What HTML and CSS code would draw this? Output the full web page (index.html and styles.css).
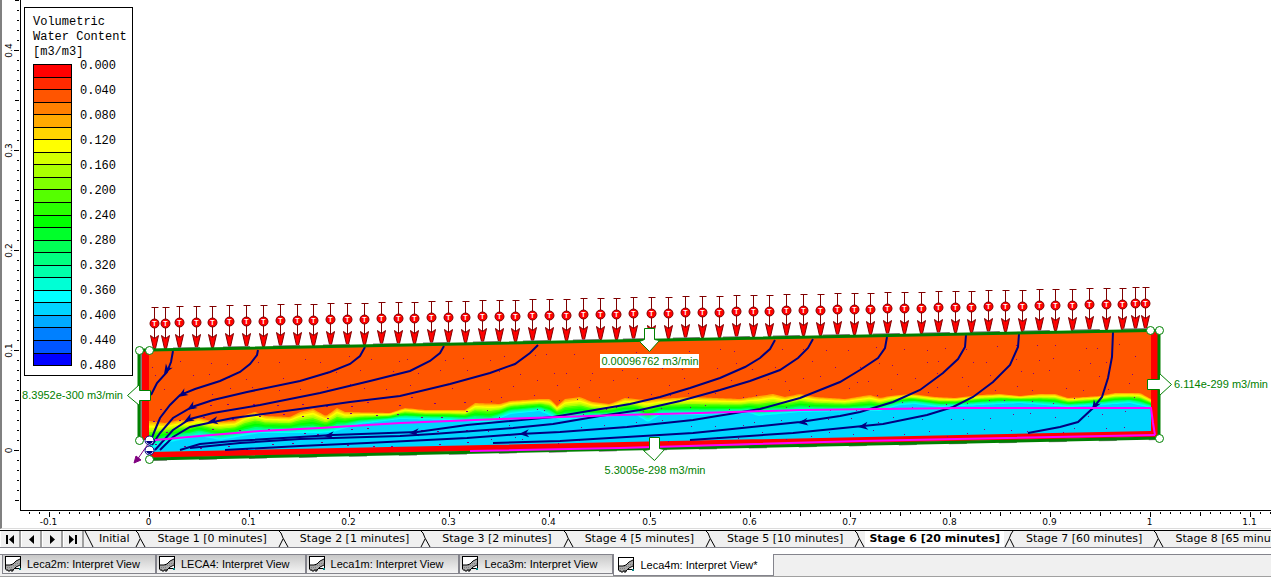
FILE: index.html
```
<!DOCTYPE html>
<html lang="en">
<head>
<meta charset="utf-8">
<title>Leca4m: Interpret View</title>
<link rel="stylesheet" href="styles.css">
</head>
<body>
<main class="plot">
  <svg class="canvas" role="img" aria-label="Volumetric water content section">
    <g id="axes" class="axes"></g>
    <polygon class="soil" points="149,350 1151,330 1151,434 149,453"/>
    <g id="bands"></g>
    <polygon class="liner" points="140,350 149,350 149,440 140,440"/>
    <polygon class="liner" points="1151,330 1159,330 1159,437 149,458 149,452 1151,431"/>
    <g id="nodes" class="nodes"></g>
    <g id="streams" class="streams"></g>
    <g id="loads" class="loads"></g>
    <g class="shade">
      <path d="M173 348.500L1150 329" stroke-dasharray="27 23"/>
      <path d="M149 460L1159 439" stroke-dasharray="18 32"/>
      <path d="M141 350V440"/>
    </g>
    <g class="outline">
      <path d="M149 350L1150 330.500H1159V438L149 459"/>
      <path d="M149 350H139V440"/>
    </g>
    <path class="table-line" d="M155 440L200 436L260 431L320 428L400 423L500 419L560 417L620 415L700 413L800 410L880 409L960 408H1151L1153 423L1155 435"/>
    <path class="table-line" d="M470 451L620 448L860 441L1155 435"/>
    <path class="seep" d="M148 444L137 460M134 463L141 460L136 456Z"/>
    <g class="water">
      <circle cx="149.500" cy="440.500" r="4.500"/><path d="M146 441H153Q152 444 149.500 444T146 441Z"/>
      <circle cx="149.500" cy="450.500" r="4.500"/><path d="M146 451H153Q152 454 149.500 454T146 451Z"/>
    </g>
    <g class="vertex">
      <circle cx="139.500" cy="350.500" r="4"/><circle cx="149.500" cy="350.500" r="4"/>
      <circle cx="139.500" cy="440.500" r="4"/><circle cx="149.500" cy="459.500" r="4"/>
      <circle cx="1150.500" cy="330.500" r="4"/><circle cx="1159.500" cy="330.500" r="4"/>
      <circle cx="1159.500" cy="438.500" r="4"/>
    </g>
    <g class="flux">
      <path d="M139.500 390.500V384.500L127.500 395.500L139.500 405.500V400.500M139.500 390.500H150.500V400.500H139.500"/>
      <path d="M1159.500 379.500V373.500L1171.500 384.500L1159.500 395.500V389.500H1147.500V379.500Z"/>
      <path d="M644.500 328.500H654.500V339.500L659.500 340.500L649.500 351.500L639.500 341.500L644.500 339.500Z"/>
      <path d="M649.500 437.500H659.500V448.500L664.500 449.500L654.500 460.500L643.500 450.500L649.500 449.500Z"/>
    </g>
    <rect class="label-back" x="600" y="354" width="99" height="14"/>
    <g class="flux-text">
      <text x="123" y="399" text-anchor="end">8.3952e-300 m3/min</text>
      <text x="650" y="365" text-anchor="middle">0.00096762 m3/min</text>
      <text x="655" y="474" text-anchor="middle">5.3005e-298 m3/min</text>
      <text x="1174" y="388">6.114e-299 m3/min</text>
    </g>
  </svg>

  <section class="legend">
    <h1 class="legend-title">Volumetric<br>Water Content<br>[m3/m3]</h1>
    <div class="legend-body">
      <div class="ramp" id="ramp"></div>
      <ul class="values">
        <li>0.000</li><li>0.040</li><li>0.080</li><li>0.120</li><li>0.160</li><li>0.200</li><li>0.240</li>
        <li>0.280</li><li>0.320</li><li>0.360</li><li>0.400</li><li>0.440</li><li>0.480</li>
      </ul>
    </div>
  </section>
</main>

<svg class="defs" aria-hidden="true">
  <symbol id="split" viewBox="0 0 11 16"><path d="M1 0L3 2L5 7L10 16M5 8L1 16" fill="none" stroke="#000"/></symbol>
  <symbol id="split-back" viewBox="0 0 11 16"><path d="M9 0L7 3L5 8L1 16M6 8L10 16" fill="none" stroke="#000"/></symbol>
  <symbol id="edge" viewBox="0 0 11 16"><path d="M1 0L9 16" fill="none" stroke="#000"/></symbol>
  <symbol id="doc" viewBox="0 0 17 16">
    <rect x=".5" y=".5" width="15" height="12" fill="#fff" stroke="#000"/>
    <path d="M1 9H5L8 8L11 5L15 3V9L11 11L8 14H1Z" fill="#a8a8a8"/>
    <path d="M1 9H5L8 8L11 5L15 3M15 9L11 11L8 14" fill="none" stroke="#000"/>
    <path d="M2 11.500H8M6 9.500H12M10 7.500H15" stroke="#808080" stroke-dasharray="1 1"/>
    <path d="M1 14H3V15H5V14H8V15H6M0 0V14"  fill="none" stroke="#000"/>
    <rect x="14" y="12" width="2" height="2" fill="#008080"/>
  </symbol>
</svg>

<nav class="stages" aria-label="Stages">
  <button class="step" aria-label="First stage"><svg width="9" height="9"><path d="M0 0H2V9H0ZM8 0V9L3 4.500Z"/></svg></button>
  <button class="step" aria-label="Previous stage"><svg width="9" height="9"><path d="M7 0V9L2 4.500Z"/></svg></button>
  <button class="step" aria-label="Next stage"><svg width="9" height="9"><path d="M2 0V9L7 4.500Z"/></svg></button>
  <button class="step" aria-label="Last stage"><svg width="9" height="9"><path d="M6 0H8V9H6ZM0 0V9L5 4.500Z"/></svg></button>
  <svg class="split"><use href="#edge"/></svg>
  <button class="stage first">Initial</button>
  <svg class="split"><use href="#split"/></svg>
  <button class="stage">Stage 1 [0 minutes]</button>
  <svg class="split"><use href="#split"/></svg>
  <button class="stage">Stage 2 [1 minutes]</button>
  <svg class="split"><use href="#split"/></svg>
  <button class="stage">Stage 3 [2 minutes]</button>
  <svg class="split"><use href="#split"/></svg>
  <button class="stage">Stage 4 [5 minutes]</button>
  <svg class="split"><use href="#split"/></svg>
  <button class="stage">Stage 5 [10 minutes]</button>
  <svg class="split"><use href="#split"/></svg>
  <button class="stage active" aria-current="true">Stage 6 [20 minutes]</button>
  <svg class="split"><use href="#split-back"/></svg>
  <button class="stage">Stage 7 [60 minutes]</button>
  <svg class="split"><use href="#split"/></svg>
  <button class="stage">Stage 8 [65 minutes]</button>
</nav>

<nav class="windows" aria-label="Open windows">
  <button class="window"><svg class="doc"><use href="#doc"/></svg>Leca2m: Interpret View</button>
  <button class="window"><svg class="doc"><use href="#doc"/></svg>LECA4: Interpret View</button>
  <button class="window"><svg class="doc"><use href="#doc"/></svg>Leca1m: Interpret View</button>
  <button class="window"><svg class="doc"><use href="#doc"/></svg>Leca3m: Interpret View</button>
  <button class="window current" aria-current="true"><svg class="doc"><use href="#doc"/></svg>Leca4m: Interpret View*</button>
</nav>
<script src="plot.js"></script>
</body>
</html>
```
FILE: styles.css
```
* { box-sizing: border-box; }
body {
  margin: 0;
  height: 100vh;
  display: flex;
  flex-direction: column;
  overflow: hidden;
  background: #fff;
  color: #000;
  font-family: "Liberation Sans", Arial, sans-serif;
}
button { font: inherit; color: inherit; border: 0; background: none; padding: 0; white-space: nowrap; }
.defs { position: absolute; width: 0; height: 0; }

/* Plot */
.plot { position: relative; flex: 1; min-height: 0; overflow: hidden; border-left: 2px solid #808080; border-bottom: 1px solid #dcdcdc; }
.canvas { display: block; width: calc(100% + 2px); height: 100%; margin-left: -2px; }
.axes { fill: none; stroke: #000; shape-rendering: crispEdges; }
.axes text { fill: #000; stroke: none; font: 9px "DejaVu Sans", sans-serif; text-anchor: middle; }
.soil { fill: #ff5500; }
.liner { fill: #f00; }
.nodes { fill: #800080; shape-rendering: crispEdges; }
.streams { fill: none; stroke: #000080; stroke-width: 2; }
.streams polygon { fill: #000080; stroke: none; }
.loads { stroke: #800000; fill: #f00; }
.loads text { stroke: none; fill: #fff; font: bold 7px "Liberation Sans", sans-serif; text-anchor: middle; }
.shade { fill: none; stroke: #808080; stroke-width: 2; }
.outline { fill: none; stroke: #008000; stroke-width: 3; }
.table-line { fill: none; stroke: #f0f; stroke-width: 2; }
.seep { fill: #800080; stroke: #800080; }
.water circle { fill: #fff; stroke: #000080; }
.water path { fill: #000080; }
.vertex circle { fill: #fff; stroke: #008000; }
.flux path { fill: #fff; stroke: #008000; }
.label-back { fill: #fff; }
.flux-text { fill: #008000; font-size: 11px; }

/* Legend */
.legend {
  position: absolute;
  left: 22px;
  top: 7px;
  width: 109px;
  padding: 7px 0 9px 8px;
  border: 1px solid #000;
  background: #fff;
  font: 12px/15px "Liberation Mono", "Courier New", monospace;
}
.legend-title { margin: 0; font: inherit; }
.legend-body { display: flex; gap: 8px; padding-top: 4px; }
.ramp { display: flex; flex-direction: column; width: 39px; height: 302px; border: 1px solid #000; }
.swatch { flex: 1; }
.swatch + .swatch { border-top: 1px solid #000; }
.values { margin: -10px 0 -13px; padding: 0; list-style: none; line-height: 25px; }

/* Stage tabs */
.stages {
  display: flex;
  height: 18px;
  margin-top: 1px;
  border-top: 1px solid #000;
  border-bottom: 1px solid #84848c;
  background: #f0f0f0;
  overflow: hidden;
  font: 11px/16px "DejaVu Sans", Verdana, sans-serif;
}
.step { flex: none; display: flex; align-items: center; justify-content: center; width: 21px; border-right: 2px solid #a0a0a0; border-left: 1px solid #fff; }
.split { flex: none; width: 11px; height: 16px; }
.stage { flex: none; padding: 0 11px; }
.first { padding: 0 6px 0 4px; }
.active { padding: 0 4px; background: #fff; font-weight: bold; }

/* Window tabs */
.windows {
  display: flex;
  flex: none;
  height: 23px;
  margin-top: 6px;
  padding: 0 2px;
  border-top: 1px solid #84848c;
  border-bottom: 1px solid #a0a0a0;
  background: #f0f0f0;
  font-size: 11px;
}
.window {
  flex: none;
  display: flex;
  align-items: center;
  gap: 5px;
  height: 19px;
  padding: 0 15px 0 2px;
  border: solid #84848c;
  border-width: 0 1px 1px;
  background: linear-gradient(#c8c8c8, #f4f4f4);
}
.current { height: 22px; margin-top: -1px; padding: 0 15px 0 4px; background: #fff; }
.doc { flex: none; width: 17px; height: 16px; }
```
FILE: plot.js
```
const NS = 'http://www.w3.org/2000/svg';
const byId = id => document.getElementById(id);
function add(parent, tag, attrs, text) {
  const el = document.createElementNS(NS, tag);
  for (const k in attrs) el.setAttribute(k, attrs[k]);
  if (text) el.textContent = text;
  parent.appendChild(el);
  return el;
}

// Legend colour ramp
const ramp = ['#ff0000', '#ff2a00', '#ff5500', '#ff8000', '#ffaa00', '#ffd500', '#ffff00', '#d4ff00',
  '#aaff00', '#80ff00', '#55ff00', '#2aff00', '#00ff00', '#00ff2a', '#00ff55', '#00ff80', '#00ffaa',
  '#00ffd5', '#00ffff', '#00d5ff', '#00aaff', '#0080ff', '#0055ff', '#0000ff'];
for (const c of ramp) {
  const s = document.createElement('div');
  s.className = 'swatch';
  s.style.background = c;
  byId('ramp').appendChild(s);
}

// Rulers: one tick per 0.01, longer at 0.05 and 0.1
const axes = byId('axes');
const lastTick = Math.floor((window.innerWidth - 149) / 10.01);
let d = `M20.5 0V510.5H${window.innerWidth}`;
for (let i = -12; i <= lastTick; i++) {
  const x = Math.round(149 + i * 10.01) + 0.5;
  const len = i % 10 === 0 ? 5 : i % 5 === 0 ? 4 : 2;
  d += `M${x} 512v${len}`;
  if (i % 10 === 0) add(axes, 'text', { x: x - 1, y: 525 }, String(i / 100));
}
for (let i = -5; i <= 45; i++) {
  const y = 450.5 - i * 10;
  const len = i % 10 === 0 ? 5 : i % 5 === 0 ? 4 : 2;
  d += `M19 ${y}h-${len}`;
  if (i % 10 === 0) add(axes, 'text', { transform: `translate(12 ${y}) rotate(-90)` }, String(i / 100));
}
add(axes, 'path', { d });

// Transition zone between the dry soil and the saturated soil
const upper = [[149,421],[165,423],[180,420],[190,421],[198,418],[215,422],[235,421],[245,415],[255,412],
  [265,416],[290,417],[300,412],[313,409],[326,416],[337,408],[345,412],[390,413],[405,408],[425,410],
  [465,410],[475,403],[500,404],[510,401],[540,399],[550,399],[557,406],[565,399],[580,397],[592,402],
  [610,404],[625,398],[645,400],[690,397],[740,399],[760,396],[773,394],[785,397],[800,394],[815,397],
  [845,399],[870,395],[880,398],[890,396],[910,394],[935,397],[955,398],[980,395],[1000,394],[1020,396],
  [1040,394],[1055,394],[1068,398],[1085,397],[1100,396],[1115,393],[1140,393],[1151,399]];
const lower = [[149,450],[165,443],[200,436],[220,440],[260,433],[320,433],[333,432],[360,424],[400,419],[450,420],
  [490,423],[510,414],[540,411],[560,420],[590,418],[620,416],[636,415],[648,422],[660,415],[700,415],
  [750,413],[758,416],[800,412],[880,411],[900,405],[915,404],[940,407],[1000,404],[1020,403],[1068,407],
  [1100,405],[1130,403],[1151,408]];
function at(line, x) {
  for (let i = 1; i < line.length; i++) {
    const [x0, y0] = line[i - 1], [x1, y1] = line[i];
    if (x <= x1) return y0 + (y1 - y0) * (x - x0) / (x1 - x0);
  }
  return line[line.length - 1][1];
}
const fills = ['#ffaa00', '#ffd500', '#ffff00', '#d4ff00', '#aaff00', '#55ff00', '#2aff00', '#00ff00',
  '#00ff2a', '#00ff80', '#00ffaa', '#00ffd5', '#00ffff', '#00d5ff'];
fills.forEach((fill, k) => {
  let pts = '';
  for (let x = 149; x <= 1151; x += 2) {
    const a = at(upper, x), b = at(lower, x);
    pts += `${x},${(a + (b - a) * k / (fills.length - 1)).toFixed(1)} `;
  }
  add(byId('bands'), 'polygon', { points: pts + '1151,432 149,452', fill });
});

// Mesh nodes
let seed = 7;
const rnd = () => (seed = (seed * 16807) % 2147483647) / 2147483647;
for (let row = 0; row < 7; row++) {
  for (let x = 158; x < 1145; x += 23) {
    const px = Math.round(x + rnd() * 18 - 6);
    const top = 350 - (px - 149) * 0.02;
    add(byId('nodes'), 'rect', { x: px, y: Math.round(top + 10 + row * 14 + rnd() * 8), width: px < 480 && row > 2 ? 2 : 1, height: 1 });
  }
}

// Flow lines, each with an arrowhead [x, y, angle]
const streams = [
  ['173,351 171,362 167,372 157,383 151,395', [164, 374, 122]],
  ['258,350 257,355 250,364 240,372 220,381 195,389 180,395 170,405 160,418 155,430 151,440', [178, 397, 148]],
  ['365,347 360,356 350,364 330,372 300,381 247,392 213,400 192,407 173,418 160,433 152,445', [187, 410, 148]],
  ['444,346 440,353 430,361 410,371 370,381 320,393 260,405 213,413 190,419 173,430 155,450', [184, 422, 150]],
  ['538,345 530,353 515,364 490,373 450,384 400,396 350,402 300,409 233,418 213,422 190,427 173,437 160,450', [208, 422, 170]],
  ['775,340 770,349 760,358 745,367 720,378 690,388 660,397 630,404 577,413 553,417 467,425 417,432 333,435 300,437 233,441 200,444 180,450', [324, 436, 176]],
  ['813,339 808,348 798,358 780,370 750,381 720,390 680,401 640,410 600,416 553,424 513,428 433,434 400,436 300,439 240,443 190,448', [409, 433, 176]],
  ['887,337 885,348 878,358 860,370 840,382 800,398 760,409 693,420 627,427 560,432 520,434 467,438 367,443 300,446 225,450', [519, 434, 176]],
  ['966,335 965,347 958,359 943,373 920,390 893,402 860,412 840,416 800,422 693,433 560,441 493,443', [798, 423, 172]],
  ['1019,334 1018,347 1010,365 993,382 973,397 953,407 927,415 883,424 853,427 793,433 690,440', [858, 427, 173]],
  ['1113,332 1112,357 1108,378 1102,397 1093,408 1078,422 1060,427 1028,433', [1092, 410, 122]],
];
for (const [points, [x, y, angle]] of streams) {
  add(byId('streams'), 'polyline', { points });
  add(byId('streams'), 'polygon', { points: '0,0 -10,-4 -7,0 -10,4', transform: `translate(${x} ${y}) rotate(${angle})` });
}

// Infiltration loads along the surface
const loads = [154,165,179,196,212,229,246,263,280,297,313,330,347,364,381,398,414,431,448,465,482,499,515,
  532,549,566,583,600,616,633,651,668,685,702,719,736,753,769,786,803,820,837,854,870,887,904,921,938,955,
  971,988,1005,1022,1039,1055,1072,1089,1106,1122,1135,1145];
for (const x of loads) {
  const y = Math.round(350 - (x - 149) * 0.02) + 0.5;
  const g = add(byId('loads'), 'g', { transform: `translate(${x + 0.5} ${y})` });
  add(g, 'path', { d: 'M-3 -43H4M0 -43V-12' });
  add(g, 'circle', { cx: 0, cy: -27, r: 4.5 });
  add(g, 'path', { d: 'M-4 -15L0 -12L4 -15L1 -2H-1Z' });
  add(g, 'text', { x: 0, y: -25 }, 'T');
}
```
